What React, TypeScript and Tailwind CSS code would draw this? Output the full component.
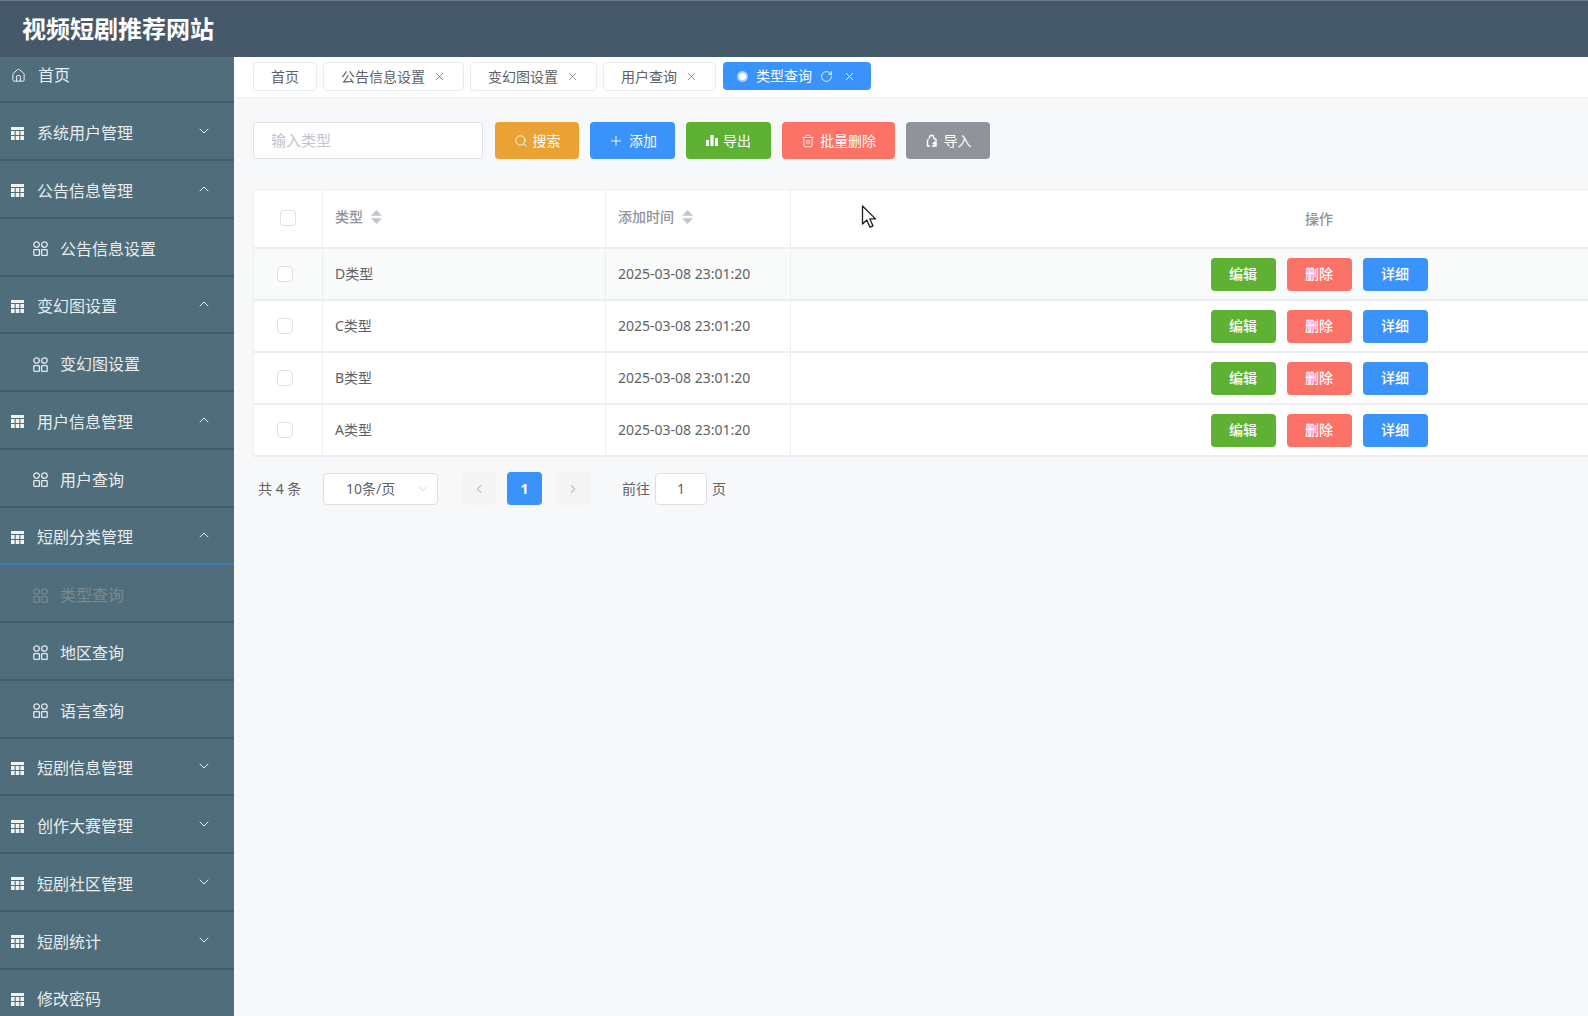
import { ChevronDown, ChevronUp, ChevronLeft, ChevronRight, Home, X, RotateCw, Search, Plus, Trash2 } from "lucide-react";

const font = "font-['Noto_Sans','Noto_Sans_CJK_SC',sans-serif]";

function GridIcon() {
  return (
    <svg width="13" height="13" viewBox="0 0 13 13" className="shrink-0" fill="#f1f3f0">
      <rect x="0" y="0" width="13" height="3" />
      <rect x="0" y="4" width="3.6" height="4" />
      <rect x="4.7" y="4" width="3.6" height="4" />
      <rect x="9.4" y="4" width="3.6" height="4" />
      <rect x="0" y="9" width="3.6" height="4" />
      <rect x="4.7" y="9" width="3.6" height="4" />
      <rect x="9.4" y="9" width="3.6" height="4" />
    </svg>
  );
}

function MenuIcon({ color = "#e4e9eb" }: { color?: string }) {
  return (
    <svg width="15" height="15" viewBox="0 0 15 15" className="shrink-0" fill="none" stroke={color} strokeWidth="1.3">
      <circle cx="3.6" cy="3.6" r="2.8" />
      <circle cx="11.4" cy="3.6" r="2.8" />
      <rect x="0.8" y="8.7" width="5.6" height="5.6" rx="0.6" />
      <rect x="8.6" y="8.7" width="5.6" height="5.6" rx="0.6" />
    </svg>
  );
}

function Row({ label, open, first }: { label: string; open?: boolean; first?: boolean }) {
  return (
    <div className={`flex items-center border-b-2 border-[#435d6b] pl-[11px] pr-[22px] ${first ? "h-[46.25px] pb-2" : "h-[57.75px] pt-1"}`}>
      {first ? <Home size={15} strokeWidth={1.6} color="#eef1f1" className="shrink-0" /> : <GridIcon />}
      <span className={`text-base text-[#e9edee] ${first ? "ml-[12px]" : "ml-[13px]"}`}>{label}</span>
      {open === undefined ? null : open ? (
        <ChevronUp size={16} strokeWidth={1.5} color="#e4e9eb" className="ml-auto -mt-1" />
      ) : (
        <ChevronDown size={16} strokeWidth={1.5} color="#e4e9eb" className="ml-auto -mt-1" />
      )}
    </div>
  );
}

function SubRow({ label, muted }: { label: string; muted?: boolean }) {
  return (
    <div className="flex h-[57.75px] items-center gap-[12px] border-b-2 border-[#435d6b] pl-[33px] pt-1">
      <MenuIcon color={muted ? "#78878b" : "#e4e9eb"} />
      <span className={`text-base ${muted ? "text-[#7b8a8d]" : "text-[#e9edee]"}`}>{label}</span>
    </div>
  );
}

function Tab({ label, close = true }: { label: string; close?: boolean }) {
  return (
    <div className="flex h-[29px] items-center rounded-sm border border-[#e9ecef] bg-white px-[17px] text-sm text-[#606266]">
      {label}
      {close && <X size={13} strokeWidth={1.3} color="#606266" className="ml-[8px]" />}
    </div>
  );
}

function ActionBtn({ label, icon, color, w }: { label: string; icon: React.ReactNode; color: string; w: string }) {
  return (
    <div className={`flex h-[37px] items-center justify-center gap-[5px] rounded text-sm text-white ${color} ${w}`}>
      {icon}
      {label}
    </div>
  );
}

function Check() {
  return <div className="h-4 w-4 rounded-sm border border-[#dcdfe6] bg-white" />;
}

function SortIcon() {
  return (
    <svg width="11" height="14" viewBox="0 0 11 14" fill="#c0c4cc" className="shrink-0">
      <path d="M5.5 0 11 5.7H0z" />
      <path d="M5.5 14 0 8.3h11z" />
    </svg>
  );
}

function OpBtn({ label, color }: { label: string; color: string }) {
  return (
    <div className={`flex h-[33px] w-[65px] items-center justify-center rounded text-sm font-medium text-white ${color}`}>
      {label}
    </div>
  );
}

const rows = ["D类型", "C类型", "B类型", "A类型"];
const gridCols = "grid grid-cols-[69px_283px_185px_1056px]";
const cellLine = "border-r border-[#ebeef5]";

export default function App() {
  return (
    <div className={`relative flex h-[1016px] w-[1588px] flex-col overflow-hidden bg-[#f7f8f9] ${font}`}>
      <header className="flex h-[57px] shrink-0 items-center border-t border-[#6a7c8c] bg-[#46596a] pl-[22px]">
        <h1 className="text-2xl font-bold text-white">视频短剧推荐网站</h1>
      </header>

      <div className="flex min-h-0 flex-1">
        <aside className="w-[234px] shrink-0 overflow-hidden bg-[#4f6d7b]">
          <Row label="首页" first />
          <Row label="系统用户管理" open={false} />
          <Row label="公告信息管理" open />
          <SubRow label="公告信息设置" />
          <Row label="变幻图设置" open />
          <SubRow label="变幻图设置" />
          <Row label="用户信息管理" open />
          <SubRow label="用户查询" />
          <div className="border-b-0">
            <div className="flex h-[57.75px] items-center border-b-2 border-[#3f7cb4] pl-[11px] pr-[22px] pt-1">
              <GridIcon />
              <span className="ml-[13px] text-base text-[#e9edee]">短剧分类管理</span>
              <ChevronUp size={16} strokeWidth={1.5} color="#e4e9eb" className="ml-auto -mt-1" />
            </div>
          </div>
          <SubRow label="类型查询" muted />
          <SubRow label="地区查询" />
          <SubRow label="语言查询" />
          <Row label="短剧信息管理" open={false} />
          <Row label="创作大赛管理" open={false} />
          <Row label="短剧社区管理" open={false} />
          <Row label="短剧统计" open={false} />
          <Row label="修改密码" />
        </aside>

        <main className="min-w-0 flex-1 overflow-hidden">
          <div className="flex h-[41px] items-start gap-[6px] border-b border-[#eceef0] bg-white pl-[19px] pt-[5px]">
            <Tab label="首页" close={false} />
            <Tab label="公告信息设置" />
            <Tab label="变幻图设置" />
            <Tab label="用户查询" />
            <div className="ml-[1px] flex h-[28px] items-center rounded-sm bg-[#3a92fb] pl-[14px] pr-[15px] text-sm text-white">
              <span className="mr-[8px] h-[11px] w-[11px] rounded-full border-2 border-[#a9d0fd] bg-white" />
              类型查询
              <RotateCw size={13} strokeWidth={1.6} className="ml-[8px]" />
              <X size={13} strokeWidth={1.6} className="ml-[10px]" />
            </div>
          </div>

          <div className="flex items-center gap-[11px] pl-[19px] pt-[24px]">
            <div className="mr-[1px] flex h-[37px] w-[230px] items-center rounded border border-[#dfe2e7] bg-white pl-[17px] text-[15px] text-[#c0c4cc]">
              输入类型
            </div>
            <ActionBtn label="搜索" color="bg-[#eba234]" w="w-[84px]" icon={<Search size={14} strokeWidth={1.6} />} />
            <ActionBtn label="添加" color="bg-[#3a92fb]" w="w-[85px]" icon={<Plus size={16} strokeWidth={1.4} />} />
            <ActionBtn
              label="导出"
              color="bg-[#5eb132]"
              w="w-[85px]"
              icon={
                <svg width="12" height="11" viewBox="0 0 12 11" fill="white">
                  <rect x="0" y="5" width="3" height="6" />
                  <rect x="4.4" y="0" width="3.2" height="11" />
                  <rect x="9" y="3" width="3" height="8" />
                </svg>
              }
            />
            <ActionBtn label="批量删除" color="bg-[#fb7267]" w="w-[113px]" icon={<Trash2 size={14} strokeWidth={1.5} />} />
            <ActionBtn
              label="导入"
              color="bg-[#909399]"
              w="w-[84px]"
              icon={
                <svg width="14" height="14" viewBox="0 0 14 14" fill="none" stroke="white" strokeWidth="1.4">
                  <path d="M5 1.5h3l1 3 2 1v6.5H7M4 4.5l1-3M3.5 5.5l-1 1V12H5" />
                  <path d="M9.5 13V8.5M7.8 10l1.7-1.7 1.7 1.7" />
                </svg>
              }
            />
          </div>

          <div className="ml-[19px] mt-[30px] border-l border-t border-[#ebeef5]">
            <div className={`${gridCols} h-[59px] border-b-2 border-[#ebeef5] bg-white text-sm font-medium text-[#909399]`}>
              <div className={`flex items-center pb-[1px] pl-[26px] ${cellLine}`}>
                <Check />
              </div>
              <div className={`flex items-center gap-[8px] pb-[3px] pl-[12px] ${cellLine}`}>
                类型
                <SortIcon />
              </div>
              <div className={`flex items-center gap-[8px] pb-[3px] pl-[12px] ${cellLine}`}>
                添加时间
                <SortIcon />
              </div>
              <div className="flex items-center justify-center">操作</div>
            </div>
            {rows.map((name, i) => (
              <div
                key={name}
                className={`${gridCols} h-[52px] border-b-2 border-[#ebeef5] text-sm text-[#606266] ${i === 0 ? "bg-[#f9fafa]" : "bg-white"}`}
              >
                <div className={`flex items-center pl-[23px] ${cellLine}`}>
                  <Check />
                </div>
                <div className={`flex items-center pl-[12px] ${cellLine}`}>{name}</div>
                <div className={`flex items-center pl-[12px] ${cellLine}`}>2025-03-08 23:01:20</div>
                <div className="flex items-center justify-center gap-[11px]">
                  <OpBtn label="编辑" color="bg-[#5eb132]" />
                  <OpBtn label="删除" color="bg-[#fb7267]" />
                  <OpBtn label="详细" color="bg-[#3a92fb]" />
                </div>
              </div>
            ))}
          </div>

          <div className="flex items-center pl-[24px] pt-[15px] text-sm text-[#606266]">
            <span className="w-[65px]">共 4 条</span>
            <div className="flex h-[32px] w-[115px] items-center justify-between rounded border border-[#dcdfe6] bg-white pl-[22px] pr-[7px]">
              10条/页
              <ChevronDown size={14} strokeWidth={1.2} color="#c0c4cc" />
            </div>
            <div className="ml-[24px] flex h-[33px] w-[34px] items-center justify-center rounded-sm bg-[#f4f4f5]">
              <ChevronLeft size={14} strokeWidth={2} color="#c0c4cc" />
            </div>
            <div className="ml-[11px] flex h-[33px] w-[35px] items-center justify-center rounded-sm bg-[#3a92fb] font-bold text-white">
              1
            </div>
            <div className="ml-[14px] flex h-[33px] w-[34px] items-center justify-center rounded-sm bg-[#f4f4f5]">
              <ChevronRight size={14} strokeWidth={2} color="#c0c4cc" />
            </div>
            <span className="ml-[32px]">前往</span>
            <div className="ml-[5px] flex h-[32px] w-[52px] items-center justify-center rounded border border-[#dcdfe6] bg-white">
              1
            </div>
            <span className="ml-[5px]">页</span>
          </div>
        </main>
      </div>

      {/* recorded mouse pointer */}
      <svg width="16" height="24" viewBox="0 0 16 24" className="absolute left-[861px] top-[205px]">
        <path d="M1.5 1v18l4.3-4 3.2 7.2 3-1.3-3.1-7h5.6z" fill="white" stroke="#1c1c1c" strokeWidth="1.3" strokeLinejoin="round" />
      </svg>
    </div>
  );
}
